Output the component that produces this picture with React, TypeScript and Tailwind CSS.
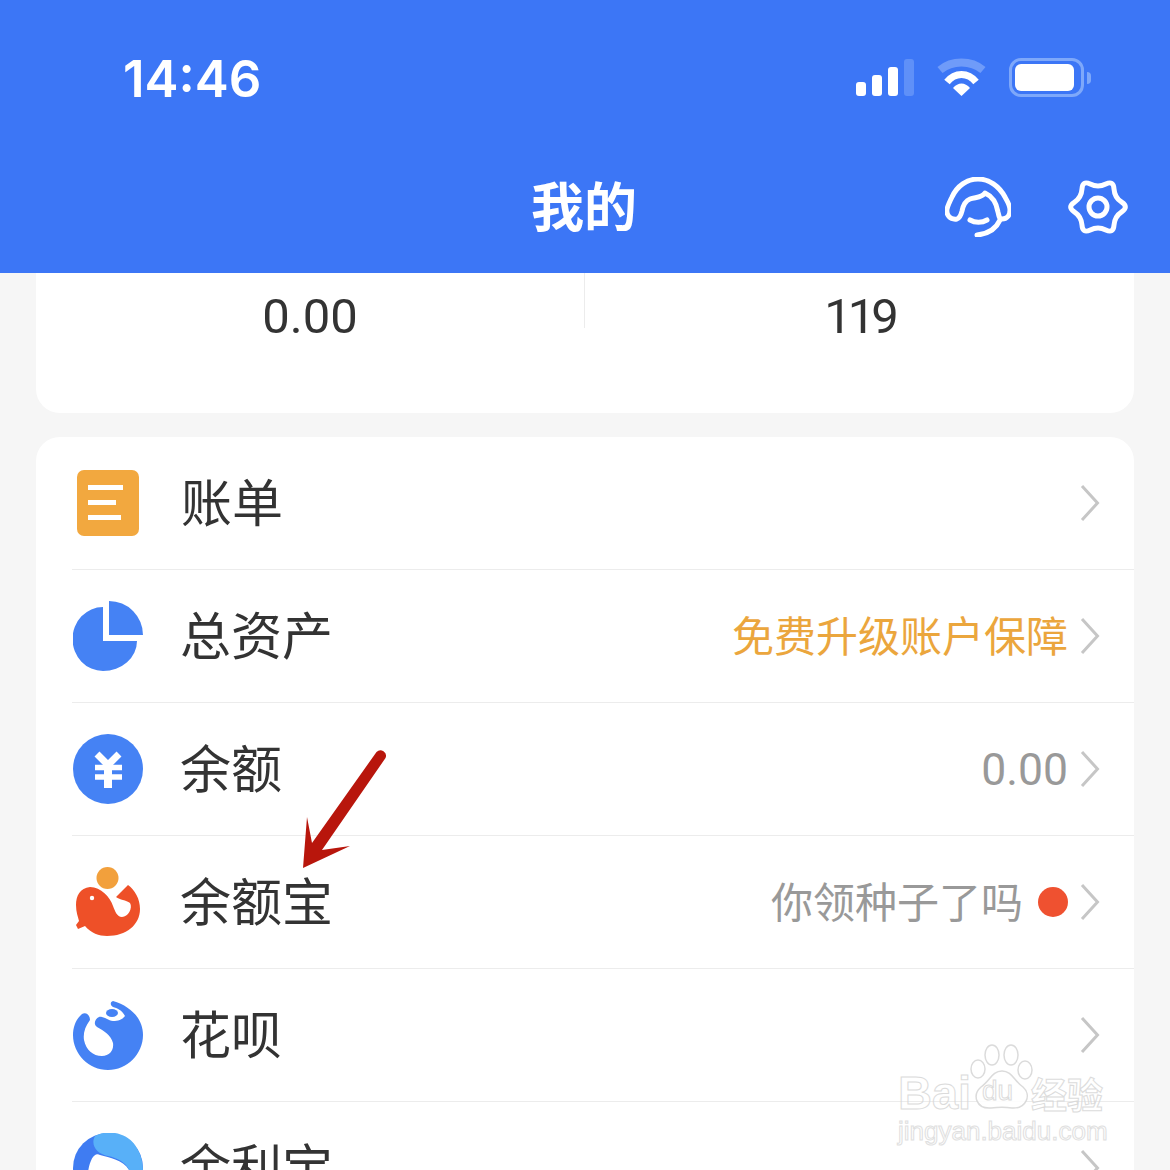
const cjk = "font-['Noto_Sans_CJK_SC','Noto_Sans',sans-serif]";

const Chevron = () => (
  <svg width="20" height="38" viewBox="0 0 20 38" className="ml-[13px] mt-[4px] shrink-0" fill="none">
    <path d="M2 2 L17.500 19 L2 36" stroke="#c6c6c6" strokeWidth="3" />
  </svg>
);

const BillIcon = () => (
  <div className="-mt-[2px] ml-[41px] mr-[42px] flex h-[66px] w-[62px] flex-col justify-center gap-[10px] rounded-[7px] bg-[#f2a83f] pl-[11px]">
    <div className="h-[5px] w-[35px] bg-white" />
    <div className="h-[5px] w-[28px] bg-white" />
    <div className="h-[5px] w-[33px] bg-white" />
  </div>
);

const IconBox = ({ children, viewBox }: { children: React.ReactNode; viewBox: string }) => (
  <svg width="70" height="70" viewBox={viewBox} className="-mt-[2px] ml-[37px] mr-[37px] shrink-0">
    {children}
  </svg>
);

const PieIcon = () => (
  <IconBox viewBox="73 601 70 70">
    <path d="M103 607 V641 H137 A34 30 0 0 1 103 671 A30.5 32 0 0 1 103 607 Z" fill="#4582f4" />
    <path d="M109 601 A34 34 0 0 1 143 635 H109 Z" fill="#4582f4" />
  </IconBox>
);

const YenIcon = () => (
  <IconBox viewBox="73 734 70 70">
    <circle cx="108" cy="769" r="35" fill="#4582f4" />
    <path d="M97 754 L108 765 L119 754" fill="none" stroke="#fff" strokeWidth="7" />
    <path d="M95 767.500 H122 M95 777 H122" stroke="#fff" strokeWidth="5.500" />
    <path d="M108 764 V788" stroke="#fff" strokeWidth="8" />
  </IconBox>
);

const DolphinIcon = () => (
  <IconBox viewBox="73 867 70 70">
    <circle cx="107.500" cy="878" r="11" fill="#f2a03c" />
    <path
      d="M90 887 C80 888 76 896 76 905 C76 912 78 917 79 921 L76 925 L78 929 L85 926 C91 933 99 936 107 936 C126 936 140 925 140 909 C140 899 135 890 128 885 L116 897 C120 900 126 900 130 903 C133 908 128 917 122 917 C117 917 115 911 113 906 C110 897 101 887 90 887 Z"
      fill="#ee5028"
    />
    <circle cx="92" cy="898" r="2.200" fill="#fff" />
  </IconBox>
);

const HuabeiIcon = () => (
  <IconBox viewBox="73 1000 70 70">
    <path
      d="M113 1001 C130 1006 143 1018 143 1035 C143 1054 127 1070 108 1070 C89 1070 73 1054 73 1035 C73 1027 76 1019 82 1014 C86 1012 90 1015 90 1020 C85 1027 83 1033 84 1040 C86 1050 93 1056 102 1056 C110 1056 114 1050 113 1043 C111 1035 104 1031 97 1027 C93 1024 95 1019 99 1017 C104 1016 108 1021 113 1021 C118 1021 122 1020 125 1016 C122 1010 117 1008 113 1007 C110 1005 110 1002 113 1001 Z"
      fill="#4582f4"
    />
    <ellipse cx="112" cy="1013" rx="6" ry="4" fill="#4582f4" />
  </IconBox>
);

const YuliIcon = () => (
  <IconBox viewBox="73 1133 70 70">
    <circle cx="108" cy="1168" r="35" fill="#3f7cf2" />
    <path d="M88 1172 C90 1160 94 1152 100 1155 C110 1158 125 1160 130 1172 V1190 H88 Z" fill="#fff" />
    <path d="M95 1136 C105 1130 125 1131 135 1145 C142 1155 143 1165 143 1172 H130 C127 1163 118 1158 108 1156 C97 1154 90 1145 95 1136 Z" fill="#58b0f8" />
  </IconBox>
);

const Row = ({ icon, label, right, last }: { icon: React.ReactNode; label: string; right?: React.ReactNode; last?: boolean }) => (
  <div className="relative flex h-[133px] items-center">
    {icon}
    <div className={`flex h-full flex-1 items-center pb-[6px] pr-[34px] ${cjk}`}>
      <span className="text-[51px] leading-none text-[#333]">{label}</span>
      <div className="-mr-px ml-auto flex items-center">{right}</div>
      <Chevron />
    </div>
    {!last && <div className="absolute bottom-0 left-[36px] right-0 h-px bg-[#ececec]" />}
  </div>
);

const gearPath = () => {
  const cx = 30;
  const cy = 30;
  const pts = Array.from({ length: 12 }, (_, i) => {
    const a = (i * Math.PI) / 6;
    const r = i % 2 === 0 ? 31 : 19;
    return [cx + r * Math.cos(a), cy + r * Math.sin(a)];
  });
  const mid = (p: number[], q: number[]) => [(p[0] + q[0]) / 2, (p[1] + q[1]) / 2];
  const start = mid(pts[11], pts[0]);
  let d = `M${start[0].toFixed(1)} ${start[1].toFixed(1)}`;
  pts.forEach((p, i) => {
    const m = mid(p, pts[(i + 1) % 12]);
    d += ` Q${p[0].toFixed(1)} ${p[1].toFixed(1)} ${m[0].toFixed(1)} ${m[1].toFixed(1)}`;
  });
  return d + " Z";
};

const StatusBar = () => (
  <div className="flex h-[156px] items-start pl-[123px] pr-[79px] pt-[51px]">
    <span className="font-['Inter',sans-serif] text-[51px] font-semibold leading-[56px] text-white">14:46</span>
    <div className="ml-auto mt-[7px] flex items-start">
      <div className="flex h-[38px] items-end gap-[6px]">
        <div className="h-[14px] w-[10px] rounded-[3px] bg-white" />
        <div className="h-[21px] w-[10px] rounded-[3px] bg-white" />
        <div className="h-[29px] w-[10px] rounded-[3px] bg-white" />
        <div className="h-[37px] w-[10px] rounded-[3px] bg-[#5f90f8]" />
      </div>
      <svg width="50" height="38" viewBox="937 59 50 38" className="ml-[23px]">
        <path d="M940 71 C952 61 971 61 983 71" fill="none" stroke="#6f9bf9" strokeWidth="8" />
        <path d="M947 83 C955 73 968 73 976 83" fill="none" stroke="#fff" strokeWidth="7" />
        <path d="M953 89 C958 83 965 83 970 89 L961.500 97 Z" fill="#fff" />
      </svg>
      <div className="ml-[22px] flex items-center">
        <div className="h-[39px] w-[75px] rounded-[12px] border-[3px] border-[#7ea8fa] p-[3px]">
          <div className="h-full w-[59px] rounded-[6px] bg-white" />
        </div>
        <div className="ml-[3px] h-[12px] w-[4px] rounded-r-full bg-[#7ea8fa]" />
      </div>
    </div>
  </div>
);

const Header = () => (
  <header className="h-[273px] bg-[#3c76f6]">
    <StatusBar />
    <div className="grid h-[102px] grid-cols-[1fr_auto_1fr] items-center pl-[40px] pr-[42px]">
      <div />
      <h1 className={`${cjk} mb-[6px] text-[53px] font-bold leading-[96px] text-white`}>我的</h1>
      <div className="flex items-center justify-end gap-[57px]">
        <svg width="66" height="60" viewBox="945 177 66 60" fill="none" stroke="#fff" strokeWidth="5" strokeLinecap="round" strokeLinejoin="round">
          <path d="M957 219 C950 220 946 215 947 209 C948 205 950 201 952 197 C957 186 967 179 978 179 C989 179 999 186 1005 197 C1007 201 1010 205 1010 210 C1010 215 1007 219 1002 219 C999 219 999 216 998 212 C997 206 994 197 985 193 C982 198 975 197 970 199 C965 201 963 206 962 211 C961 215 960 218 957 219 Z" />
          <path d="M1000 220 C996 229 987 234 977 235" />
          <path d="M970 220 C975 223 982 223 987 220" />
        </svg>
        <svg width="60" height="60" viewBox="0 0 60 60" fill="none" stroke="#fff" strokeWidth="5" strokeLinejoin="round">
          <path d={gearPath()} />
          <circle cx="30" cy="30" r="9" />
        </svg>
      </div>
    </div>
  </header>
);

const Watermark = () => (
  <div className="pointer-events-none absolute left-[896px] top-[1040px] h-[106px] w-[212px] opacity-90">
    <div className="absolute left-[2px] top-[27px] font-['Liberation_Sans',sans-serif] text-[47px] font-bold leading-[52px] text-transparent [-webkit-text-stroke:1px_#d8d8d8]">Bai</div>
    <svg width="72" height="72" viewBox="0 0 72 72" className="absolute left-[70px] top-[3px]" fill="#fff" stroke="#d8d8d8" strokeWidth="1.500">
      <ellipse cx="26" cy="12" rx="7" ry="10" />
      <ellipse cx="45" cy="12" rx="7" ry="10" />
      <ellipse cx="12" cy="26" rx="7" ry="9" />
      <ellipse cx="59" cy="27" rx="7" ry="9" />
      <path d="M36 28 C46 28 48 38 57 44 C66 52 60 66 46 65 C40 64 32 64 25 65 C10 66 6 52 15 44 C24 38 26 28 36 28 Z" />
    </svg>
    <div className="absolute left-[86px] top-[34px] font-['Liberation_Sans',sans-serif] text-[28px] leading-[34px] text-transparent [-webkit-text-stroke:1px_#d8d8d8]">du</div>
    <div className={`absolute left-[135px] top-[32px] ${cjk} text-[36px] font-bold leading-[42px] text-transparent [-webkit-text-stroke:1px_#d8d8d8]`}>经验</div>
    <div className="absolute left-[2px] top-[76px] whitespace-nowrap font-['Liberation_Sans',sans-serif] text-[26px] leading-[30px] text-transparent [-webkit-text-stroke:1px_#dcdcdc]">jingyan.baidu.com</div>
  </div>
);

const Arrow = () => (
  <svg width="90" height="130" viewBox="298 748 90 130" className="pointer-events-none absolute left-[298px] top-[748px]">
    <path
      d="M303 868 L307 817 L312 843 L376.500 752 A5.500 5.500 0 0 1 385.500 758 L322 850 L350 846 Z"
      fill="#b8160c"
    />
  </svg>
);

export default function App() {
  return (
    <div className="relative h-[1170px] w-[1170px] overflow-hidden bg-[#f6f6f6]">
      <Header />
      <main className="px-[36px]">
        <section className="h-[140px] rounded-b-[24px] bg-white">
          <div className="grid grid-cols-[549px_1fr]">
            <div className="flex h-[55px] items-center justify-center border-r border-[#ececec]">
              <span className="mt-[32px] font-['Roboto',sans-serif] text-[49px] leading-none text-[#333]">0.00</span>
            </div>
            <div className="flex h-[55px] items-center justify-center">
              <span className="mt-[32px] font-['Roboto',sans-serif] text-[49px] leading-none tracking-[-4px] text-[#333]">119</span>
            </div>
          </div>
        </section>
        <section className="mt-[24px] rounded-t-[24px] bg-white">
          <Row icon={<BillIcon />} label="账单" />
          <Row
            icon={<PieIcon />}
            label="总资产"
            right={<span className="mt-px text-[42px] leading-none text-[#eba63d]">免费升级账户保障</span>}
          />
          <Row
            icon={<YenIcon />}
            label="余额"
            right={<span className="mt-[7px] font-['Roboto',sans-serif] text-[44.5px] leading-none text-[#999]">0.00</span>}
          />
          <Row
            icon={<DolphinIcon />}
            label="余额宝"
            right={
              <>
                <span className="mt-px text-[42px] leading-none text-[#999]">你领种子了吗</span>
                <span className="ml-[15px] mt-[5px] h-[30px] w-[30px] rounded-full bg-[#ef5130]" />
              </>
            }
          />
          <Row icon={<HuabeiIcon />} label="花呗" />
          <Row icon={<YuliIcon />} label="余利宝" last />
        </section>
      </main>
      <Arrow />
      <Watermark />
    </div>
  );
}
